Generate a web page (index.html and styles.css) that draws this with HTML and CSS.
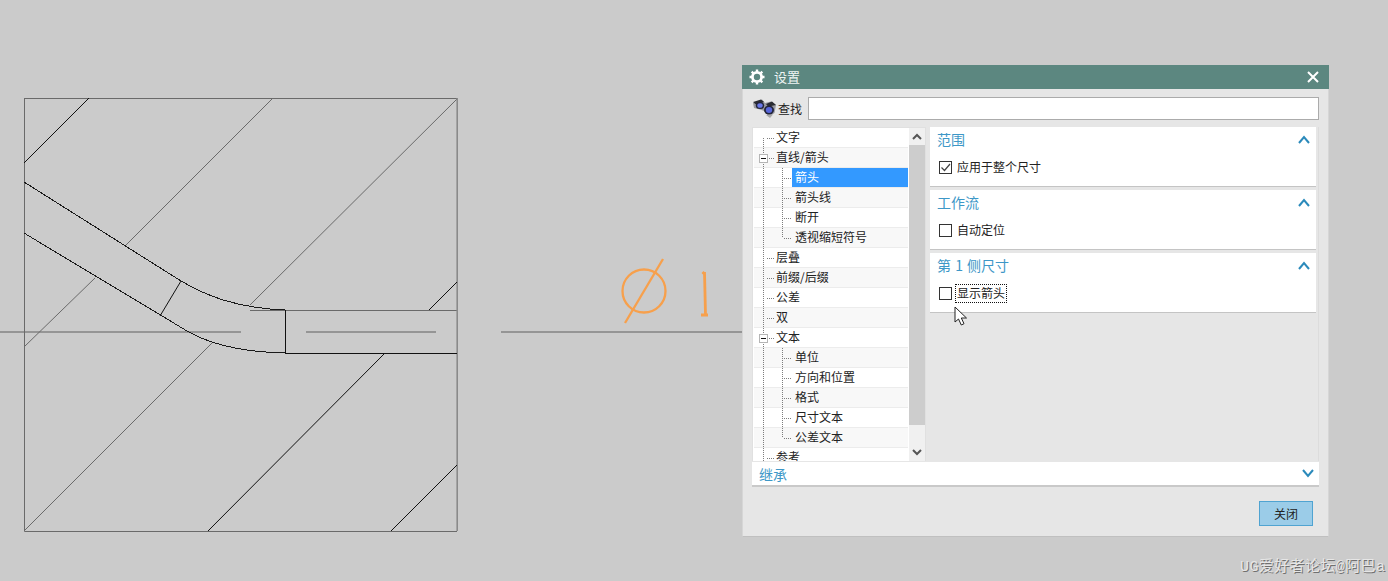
FILE: index.html
```html
<!DOCTYPE html>
<html lang="zh-CN">
<head>
<meta charset="utf-8">
<title>设置</title>
<link rel="stylesheet" href="styles.css">
</head>
<body>
<svg class="drawing" width="1388" height="581" viewBox="0 0 1388 581">
  <g class="center">
    <path d="M0 332H241M306 332H436M501 332H742"/>
  </g>
  <g class="grey">
    <path d="M24.500 98.500H457M24.500 98V531.500H457"/>
    <path d="M273 98L126 245M95 278L24 347"/>
    <path d="M457 99L250 305"/>
    <path d="M213 342L24 531"/>
    <path d="M250 310.500H457"/>
  </g>
  <path class="edge" d="M457.200 98V531"/>
  <g class="black">
    <path d="M89 98L24 163"/>
    <path d="M457 282L429 310"/>
    <path d="M385 353L208 531"/>
    <path d="M457 465L391 531"/>
    <path d="M181 281L160 316"/>
    <path d="M285.500 310V353M285 353.500H457"/>
  </g>
  <g class="band">
    <path d="M24 182L181 281C205 295 235 308 285 310"/>
    <path d="M24 233L187 331C208 343 240 352 285 353"/>
  </g>
  <g class="dim">
    <circle cx="644" cy="291" r="21.500"/>
    <path d="M663 259L625 323"/>
    <path class="one" d="M704.500 272L705.500 315M701 315H708M704.500 272L702.500 274"/>
  </g>
</svg>

<section class="dialog">
  <header class="titlebar">
    <svg class="gear" width="16" height="16" viewBox="0 0 16 16">
      <circle cx="8" cy="8" r="4.600" fill="none" stroke="#fff" stroke-width="2.800"/>
      <path stroke="#fff" stroke-width="2.400" d="M8 .5V3M8 13V15.500M.5 8H3M13 8H15.500M2.700 2.700L4.500 4.500M11.500 11.500L13.300 13.300M13.300 2.700L11.500 4.500M4.500 11.500L2.700 13.300"/>
    </svg>
    <span class="title">设置</span>
    <svg class="close-x" width="12" height="12" viewBox="0 0 12 12"><path d="M1 1L11 11M11 1L1 11"/></svg>
  </header>

  <div class="content">
    <div class="search">
      <svg class="binoculars" width="23" height="21" viewBox="0 0 23 21">
        <path fill="#9a9ba0" d="M0 5L9 1.500L12 5L18 3.500L23 7L21.500 15L16 18.500L11 13L7 11.500L1 10z"/>
        <path fill="#2b2c32" d="M0 4L8 1.500L11 4L6 6L3 6.500zM13 6L19 3.500L23 7L18 8L15 8.500z"/>
        <ellipse cx="7" cy="7.500" rx="4.200" ry="3.600" fill="#23253a"/>
        <ellipse cx="7" cy="7.500" rx="2.700" ry="2.300" fill="#6a78e8"/>
        <ellipse cx="16" cy="12" rx="5" ry="4.500" fill="#23253a"/>
        <ellipse cx="16" cy="12" rx="3.200" ry="2.900" fill="#5866da"/>
        <path fill="#a8a8a8" d="M13 17L20 16.500L17 20z"/>
      </svg>
      <span class="search-label">查找</span>
      <input class="search-input" type="text">
    </div>

    <div class="main">
      <div class="tree">
        <div class="tree-list">
          <div class="row lv1">文字</div>
          <div class="row lv1 alt">直线/箭头</div>
          <div class="row lv2"><span class="label selected">箭头</span></div>
          <div class="row lv2 alt"><span class="label">箭头线</span></div>
          <div class="row lv2"><span class="label">断开</span></div>
          <div class="row lv2 alt"><span class="label">透视缩短符号</span></div>
          <div class="row lv1">层叠</div>
          <div class="row lv1 alt">前缀/后缀</div>
          <div class="row lv1">公差</div>
          <div class="row lv1 alt">双</div>
          <div class="row lv1">文本</div>
          <div class="row lv2 alt"><span class="label">单位</span></div>
          <div class="row lv2"><span class="label">方向和位置</span></div>
          <div class="row lv2 alt"><span class="label">格式</span></div>
          <div class="row lv2"><span class="label">尺寸文本</span></div>
          <div class="row lv2 alt"><span class="label">公差文本</span></div>
          <div class="row lv1">参考</div>
          <svg class="guides" width="154" height="333" viewBox="754 128 154 333">
            <path class="dots" d="M763.500 138V461M782.500 168V238M782.500 348V438"/>
            <path class="dots" d="M767 138.500H774M767 158.500H774M767 258.500H774M767 278.500H774M767 298.500H774M767 318.500H774M767 338.500H774M767 458.500H774"/>
            <path class="dots" d="M784 178.500H791M784 198.500H791M784 218.500H791M784 238.500H791M784 358.500H791M784 378.500H791M784 398.500H791M784 418.500H791M784 438.500H791"/>
            <g class="expander">
              <rect x="759.500" y="154.500" width="8" height="8"/>
              <path d="M761 158.500H766"/>
              <rect x="759.500" y="334.500" width="8" height="8"/>
              <path d="M761 338.500H766"/>
            </g>
          </svg>
        </div>
        <div class="scrollbar">
          <div class="sb-btn"><svg width="10" height="7" viewBox="0 0 10 7"><path d="M1 6L5 2L9 6"/></svg></div>
          <div class="sb-thumb"></div>
          <div class="sb-track"></div>
          <div class="sb-btn"><svg width="10" height="7" viewBox="0 0 10 7"><path d="M1 1L5 5L9 1"/></svg></div>
        </div>
      </div>

      <div class="pane">
        <div class="panel">
          <div class="panel-head">
            <span class="panel-title">范围</span>
            <svg class="chevron" width="12" height="9" viewBox="0 0 12 9"><path d="M1 8L6 2L11 8"/></svg>
          </div>
          <div class="check-row">
            <span class="box"><svg width="11" height="11" viewBox="0 0 11 11"><path d="M1.500 5.500L4.500 8.500L10 2"/></svg></span>
            <span class="check-text">应用于整个尺寸</span>
          </div>
        </div>
        <div class="panel">
          <div class="panel-head">
            <span class="panel-title">工作流</span>
            <svg class="chevron" width="12" height="9" viewBox="0 0 12 9"><path d="M1 8L6 2L11 8"/></svg>
          </div>
          <div class="check-row">
            <span class="box"></span>
            <span class="check-text">自动定位</span>
          </div>
        </div>
        <div class="panel">
          <div class="panel-head">
            <span class="panel-title spaced">第 1 侧尺寸</span>
            <svg class="chevron" width="12" height="9" viewBox="0 0 12 9"><path d="M1 8L6 2L11 8"/></svg>
          </div>
          <div class="check-row">
            <span class="box"></span>
            <span class="check-text focused">显示箭头</span>
          </div>
        </div>
      </div>
    </div>

    <div class="inherit">
      <span class="panel-title">继承</span>
      <svg class="chevron" width="12" height="9" viewBox="0 0 12 9"><path d="M1 1L6 7L11 1"/></svg>
    </div>

    <div class="actions">
      <button class="close-btn" type="button">关闭</button>
    </div>
  </div>
</section>

<svg class="cursor" width="14" height="20" viewBox="0 0 14 20">
  <path d="M1 1V16L4.500 13L7.300 19L10 17.700L7.300 12H12.500z"/>
</svg>

<div class="watermark">UG爱好者论坛@阿巴a</div>
</body>
</html>
```

FILE: styles.css
```css
* {
  box-sizing: border-box;
}

html,
body {
  margin: 0;
  padding: 0;
  width: 1388px;
  height: 581px;
  overflow: hidden;
  background: #cbcbcb;
  font-family: "Noto Sans CJK SC", "Noto Sans", sans-serif;
  font-size: 12px;
  color: #222;
}

.drawing {
  position: absolute;
  left: 0;
  top: 0;
}

.drawing path,
.drawing circle {
  fill: none;
}

.center path {
  stroke: #959595;
  stroke-width: 2;
}

.grey path {
  stroke: #6a6a6a;
  stroke-width: 1;
}

.drawing .edge {
  stroke: #8a8a8a;
  stroke-width: 1.600;
}

.black path {
  stroke: #111;
  stroke-width: 1;
}

.band path {
  stroke: #1a1a1a;
  stroke-width: 1;
  shape-rendering: crispEdges;
}

.dim path,
.dim circle {
  stroke: #f7a04c;
  stroke-width: 2.300;
}

.dim path.one {
  stroke-width: 2.800;
}

.dialog {
  position: absolute;
  left: 742px;
  top: 65px;
  width: 587px;
  height: 472px;
  background: #e6e6e6;
  border-bottom: 1px solid #c0c0c0;
  border-right: 1px solid #d6d6d6;
  border-left: 1px solid #d6d6d6;
  display: flex;
  flex-direction: column;
}

.titlebar {
  height: 24px;
  margin: 0 -1px;
  background: #5c8780;
  display: flex;
  align-items: center;
  padding: 0 10px 0 7px;
  flex: none;
}

.gear {
  flex: none;
}

.title {
  margin-left: 9px;
  font-size: 13px;
  color: #eef5f3;
  line-height: 24px;
}

.close-x {
  margin-left: auto;
  flex: none;
}

.close-x path {
  stroke: #fff;
  stroke-width: 2;
  fill: none;
}

.content {
  flex: 1;
  padding: 8px 9px 0;
  display: flex;
  flex-direction: column;
  min-height: 0;
}

.search {
  display: flex;
  align-items: center;
  height: 23px;
  flex: none;
}

.binoculars {
  margin-left: 1px;
  flex: none;
}

.search-label {
  margin-left: 2px;
  width: 24px;
  line-height: 23px;
}

.search-input {
  margin-left: 6px;
  flex: 1;
  height: 23px;
  background: #fff;
  border: 1px solid #ababab;
  padding: 0;
  outline: none;
}

.main {
  margin-top: 7px;
  height: 334px;
  display: flex;
  gap: 4px;
  flex: none;
}

.tree {
  width: 174px;
  flex: none;
  background: #fff;
  border: 1px solid #e0e0e0;
  border-bottom: 0;
  padding-left: 1px;
  display: flex;
}

.tree-list {
  position: relative;
  width: 154px;
  height: 333px;
  overflow: hidden;
  flex: none;
}

.row {
  height: 20px;
  line-height: 17px;
  border-bottom: 1px solid #ececec;
  background: #fff;
  display: flex;
  white-space: nowrap;
}

.row.alt {
  background: #f8f8f8;
}

.lv1 {
  padding-left: 22px;
}

.lv2 {
  padding-left: 38px;
}

.label {
  flex: 1;
  padding-left: 3px;
}

.label.selected {
  background: #3399ff;
  color: #fff;
}

.guides {
  position: absolute;
  left: 0;
  top: 0;
}

.dots {
  fill: none;
  stroke: #7d7d7d;
  stroke-width: 1;
  stroke-dasharray: 1 1;
}

.expander rect {
  fill: #fff;
  stroke: #b5b5b5;
}

.expander path {
  fill: none;
  stroke: #111;
}

.scrollbar {
  width: 16px;
  margin-left: 1px;
  flex: none;
  display: flex;
  flex-direction: column;
  background: #f0f0f0;
}

.sb-btn {
  height: 17px;
  flex: none;
  display: flex;
  align-items: center;
  justify-content: center;
}

.sb-btn path {
  fill: none;
  stroke: #555;
  stroke-width: 2;
}

.sb-thumb {
  height: 280px;
  flex: none;
  background: #cdcdcd;
}

.sb-track {
  flex: 1;
}

.pane {
  flex: 1;
  display: flex;
  flex-direction: column;
  gap: 3px;
  padding-right: 2px;
  border-right: 1px solid #dcdcdc;
  min-width: 0;
}

.panel {
  height: 60px;
  flex: none;
  background: #fff;
  border-bottom: 1px solid #c4c4c4;
}

.panel-head {
  height: 24px;
  display: flex;
  align-items: center;
  padding: 0 6px 0 7px;
}

.panel-title {
  font-size: 14px;
  color: #3d97c7;
  line-height: 28px;
}

.panel-title.spaced {
  word-spacing: 1px;
}

.chevron {
  margin-left: auto;
  flex: none;
}

.chevron path {
  fill: none;
  stroke: #2b8abb;
  stroke-width: 2;
}

.check-row {
  display: flex;
  align-items: center;
  height: 21px;
  margin-top: 6px;
  padding-left: 9px;
}

.box {
  width: 13px;
  height: 13px;
  background: #fff;
  border: 1px solid #333;
  flex: none;
  display: flex;
  align-items: center;
  justify-content: center;
}

.box path {
  fill: none;
  stroke: #444;
  stroke-width: 1.200;
}

.check-text {
  margin-left: 5px;
  line-height: 17px;
  padding-bottom: 2px;
  white-space: nowrap;
}

.check-text.focused {
  margin-left: 3px;
  padding: 0 2px 2px;
  outline: 1px dotted #111;
  outline-offset: -1px;
}

.inherit {
  margin-top: 1px;
  height: 25px;
  flex: none;
  background: #fff;
  border-bottom: 2px solid #c9c9c9;
  display: flex;
  align-items: center;
  padding: 0 5px 0 7px;
}

.actions {
  margin-top: 14px;
  padding-right: 6px;
  display: flex;
  justify-content: flex-end;
}

.close-btn {
  width: 54px;
  height: 25px;
  background: #9bcce8;
  border: 1px solid #4fa3d1;
  padding: 0;
  font: 12px "Noto Sans CJK SC", sans-serif;
  color: #222;
}

.cursor {
  position: absolute;
  left: 954px;
  top: 306px;
}

.cursor path {
  fill: #fff;
  stroke: #222;
  stroke-width: 1;
}

.watermark {
  position: absolute;
  left: 1240px;
  top: 558px;
  font-family: "Liberation Mono", "Noto Sans CJK SC", monospace;
  font-size: 15px;
  line-height: 20px;
  letter-spacing: 0.400px;
  color: #e6e6e6;
  text-shadow: 1px 1px 0 #707070;
  white-space: nowrap;
}
```
